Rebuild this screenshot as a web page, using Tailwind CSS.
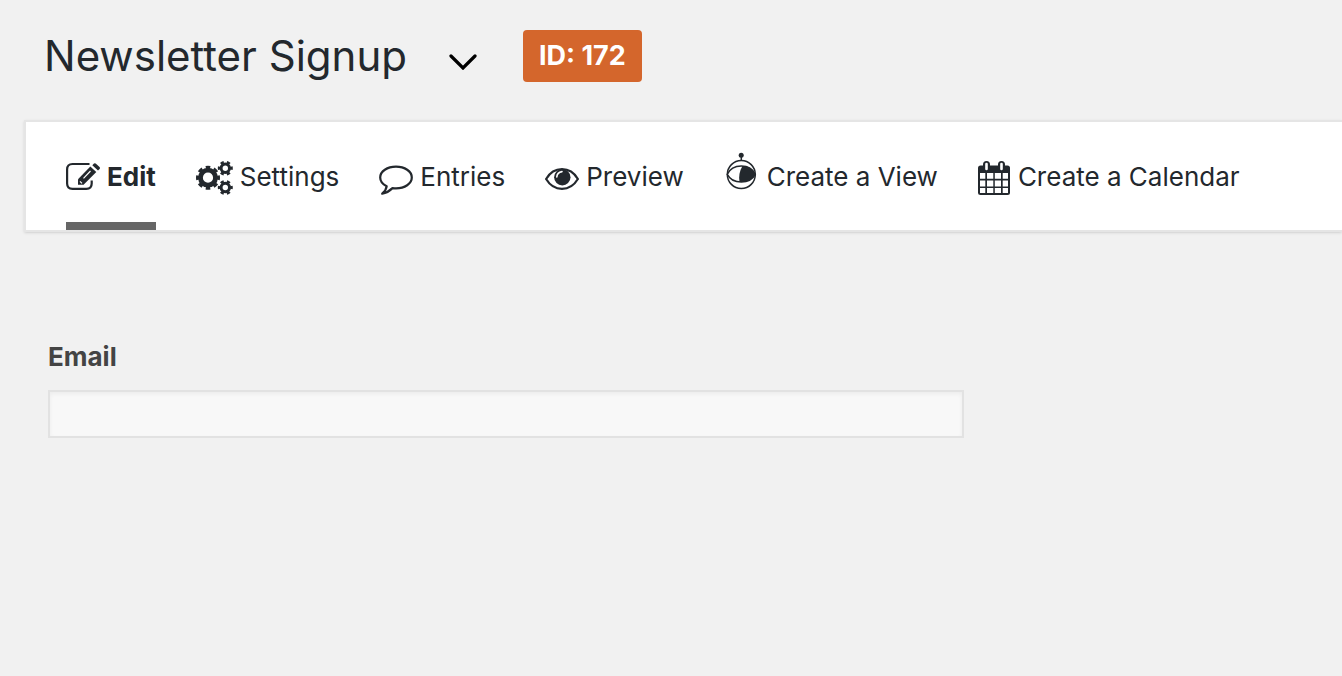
<!DOCTYPE html>
<html lang="en">

<head>
    <meta charset="UTF-8" />
    <meta name="viewport" content="width=device-width, initial-scale=1.0" />
    <title>Newsletter Signup</title>
    <script src="https://cdn.jsdelivr.net/npm/@tailwindcss/browser@4"></script>
</head>

<body class="min-h-screen overflow-x-hidden bg-[#f1f1f1] font-['Inter',sans-serif] text-[#23282d]">
    <header class="flex items-center pt-[30px] pb-[38px] pl-11">
        <h1 class="text-[42px] leading-[52px] whitespace-nowrap">Newsletter Signup</h1>
        <button type="button" aria-label="Switch form" class="ml-[42px] pt-3 text-black">
            <svg class="h-4 w-7" viewBox="0 0 28 16" fill="none" stroke="currentColor" stroke-width="3.2" stroke-linecap="round">
                <path d="M2 2l12 12L26 2" />
            </svg>
        </button>
        <span class="ml-[46px] rounded bg-[#d4662c] px-4 text-[27px] leading-[52px] font-bold whitespace-nowrap text-white">ID: 172</span>
    </header>

    <!-- form toolbar -->
    <nav class="ml-6 border-2 border-r-0 border-[#e5e5e5] bg-white pl-10 shadow-sm">
        <ul class="flex gap-10 text-[26px] leading-[34px] whitespace-nowrap">
            <li>
                <a href="#" aria-current="page" class="flex h-27 items-start gap-[7px] border-y-8 border-t-transparent border-b-[#666] pt-[30px] font-bold">
                    <svg class="h-9 w-[34px] shrink-0" viewBox="0 0 34 36" fill="none">
                        <path d="M23.5 4H6.5C3 4 1.1 6 1.1 9.5v14c0 3.5 1.9 5.3 5.4 5.3h13.8c3.5 0 5.4-1.8 5.4-5.3v-3" stroke="currentColor" stroke-width="2.2" />
                        <path d="M12 24.7v-5.4L24.3 6.5l6 5.4-12.7 12.8z" fill="currentColor" />
                        <path d="M26.3 5.3l1.7-1.7q1-.8 2 .1l3.5 3.2q.9 1 .1 2L32 10.6z" fill="currentColor" />
                        <path d="M17.5 18.3l7-7.3M14 21.3l2 2" stroke="#fff" stroke-width="1.2" />
                    </svg>
                    Edit
                </a>
            </li>
            <li>
                <a href="#" class="flex h-27 items-start gap-[7px] border-y-8 border-transparent pt-[30px]">
                    <svg class="h-9 w-[37px] shrink-0" viewBox="0 0 37 36" fill="none" stroke="currentColor">
                        <circle cx="12" cy="17.7" r="7.5" stroke-width="4.8" />
                        <circle cx="12" cy="17.7" r="10" stroke-width="4" pathLength="16" stroke-dasharray="1.1 .9" stroke-dashoffset=".55" />
                        <circle cx="29.3" cy="8.2" r="4.2" stroke-width="3" />
                        <circle cx="29.3" cy="8.2" r="5.8" stroke-width="3.4" pathLength="12" stroke-dasharray="1 1" stroke-dashoffset=".5" />
                        <circle cx="29.3" cy="27.5" r="4.2" stroke-width="3" />
                        <circle cx="29.3" cy="27.5" r="5.8" stroke-width="3.4" pathLength="12" stroke-dasharray="1 1" stroke-dashoffset=".5" />
                    </svg>
                    Settings
                </a>
            </li>
            <li>
                <a href="#" class="flex h-27 items-start gap-[7px] border-y-8 border-transparent pt-[30px]">
                    <svg class="h-9 w-[34px] shrink-0" viewBox="0 0 34 36" fill="none" stroke="currentColor" stroke-width="2.2" stroke-linejoin="round">
                        <path d="M7.7 26.2C3.5 24.2 1.2 21 1.2 17.5 1.2 11.3 8.3 6.7 17 6.7s15.8 4.6 15.8 10.8S25.7 28.3 17 28.3c-1.3 0-2.4-.1-3.5-.2C10.5 31 7 33 3.2 33.7 5.7 31.6 7.4 29 7.7 26.2z" />
                    </svg>
                    Entries
                </a>
            </li>
            <li>
                <a href="#" class="flex h-27 items-start gap-[7px] border-y-8 border-transparent pt-[30px]">
                    <svg class="h-9 w-[34px] shrink-0" viewBox="0 0 34 36" fill="none" stroke="currentColor">
                        <path d="M1.1 19C5 12.5 10.5 9.2 17 9.2S29 12.5 32.9 19C29 25.5 23.5 28.8 17 28.8S5 25.5 1.1 19z" stroke-width="2.2" stroke-linejoin="round" />
                        <circle cx="17.3" cy="17.2" r="8.2" fill="currentColor" stroke="none" />
                        <path d="M11.8 17c.2-3 2.2-5 5.2-5.4" stroke="#fff" stroke-width="1.6" stroke-linecap="round" />
                    </svg>
                    Preview
                </a>
            </li>
            <li>
                <a href="#" class="flex h-27 items-start gap-[7px] border-y-8 border-transparent pt-[30px]">
                    <svg class="h-9 w-9 shrink-0 overflow-visible" viewBox="2 0 36 36" fill="none" stroke="currentColor" stroke-width="1.5">
                        <circle cx="19.3" cy="14.5" r="14" />
                        <path d="M19.3-4v5" />
                        <circle cx="19.2" cy="-4.8" r="2.5" fill="currentColor" stroke="none" />
                        <path d="M5.3 14.3C8 8.5 13 6 19.3 6s11.3 2.5 14 8.3C30.5 19.5 25.5 22 19.3 22S8 19.5 5.3 14.3z" />
                        <path d="M20.5 6C17.5 11 16.5 16.5 17.5 22c7 .4 13-2 15.8-7.7C30.7 8.5 26.5 6 20.5 6z" fill="currentColor" stroke="none" />
                    </svg>
                    Create a View
                </a>
            </li>
            <li>
                <a href="#" class="flex h-27 items-start gap-[7px] border-y-8 border-transparent pt-[30px]">
                    <svg class="h-9 w-[33px] shrink-0" viewBox="0 0 33 36" fill="none" stroke="currentColor">
                        <path d="M2.5 5.5h27q2.5 0 2.5 2.5v24.5q0 2.5-2.5 2.5h-27Q0 35 0 32.5V8q0-2.5 2.5-2.5z" fill="currentColor" stroke="none" />
                        <path d="M2 13h5.3v5.8H2zM9 13h6.3v5.8H9zM16.8 13H23v5.8h-6.2zM24.7 13H30v5.8h-5.3zM2 20.4h5.3v6H2zM9 20.4h6.3v6H9zM16.8 20.4H23v6h-6.2zM24.7 20.4H30v6h-5.3zM2 28h5.3v5H2zM9 28h6.3v5H9zM16.8 28H23v5h-6.2zM24.7 28H30v5h-5.3z" fill="#fff" stroke="none" />
                        <path d="M8.5 4.5v3M23.5 4.5v3" stroke-width="7" stroke-linecap="round" />
                        <path d="M8.5 4v5M23.5 4v5" stroke="#fff" stroke-width="2.6" stroke-linecap="round" />
                    </svg>
                    Create a Calendar
                </a>
            </li>
        </ul>
    </nav>

    <main class="px-12 pt-[107px]">
        <form>
            <label for="email" class="block text-[26px] leading-9 font-bold text-[#444]">Email</label>
            <input id="email" type="email" class="mt-[15px] block h-12 w-full max-w-[916px] border-2 border-[#e2e2e2] bg-[#f8f8f8] px-3 text-2xl inset-shadow-sm" />
        </form>
    </main>
</body>

</html>
